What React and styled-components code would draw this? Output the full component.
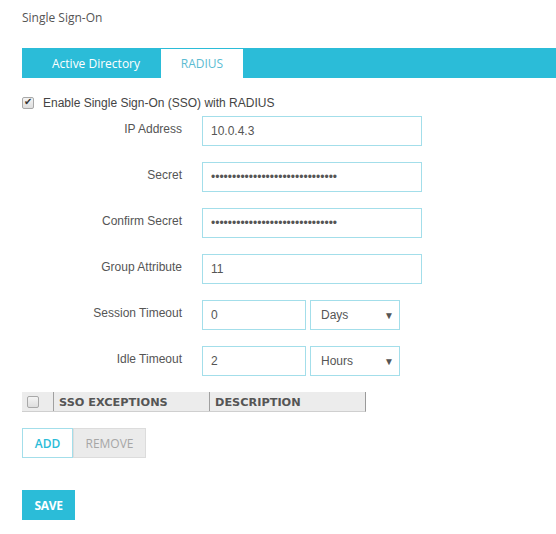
import React, { useState } from 'react';
import styled, { createGlobalStyle } from 'styled-components';

const GlobalStyle = createGlobalStyle`
  body {
    margin: 0;
    background: #fff;
    font-family: "Open Sans", Arial, sans-serif;
  }
`;

const Page = styled.div`
  padding: 9px 0 0 22px;
  width: 534px;
`;

const Title = styled.div`
  font-size: 12px;
  line-height: 18px;
  color: #555;
`;

const TabBar = styled.div`
  display: flex;
  margin-top: 21px;
  height: 30px;
  background: #2bbcd8;
`;

const Tab = styled.button`
  width: ${(p) => p.$width}px;
  height: ${(p) => (p.$active ? 29 : 30)}px;
  margin-top: ${(p) => (p.$active ? 1 : 0)}px;
  margin-right: 1px;
  border: none;
  padding: 0 0 0 ${(p) => p.$indent || 0}px;
  font-family: "Open Sans", Arial, sans-serif;
  font-size: 12px;
  background: ${(p) => (p.$active ? '#fff' : '#2bbcd8')};
  color: ${(p) => (p.$active ? '#5cbcd2' : '#fff')};
  cursor: pointer;
`;

const Checkbox = styled.input.attrs({ type: 'checkbox' })`
  appearance: none;
  box-sizing: border-box;
  position: relative;
  margin: 0;
  width: 12px;
  height: 12px;
  border: 1px solid #a8a8a8;
  border-radius: 2px;
  background: linear-gradient(#f4f4f4, #dedede);

  &:checked::after {
    content: '✔';
    position: absolute;
    left: 1px;
    top: -2px;
    font-size: 10px;
    line-height: 12px;
    color: #333;
  }
`;

const EnableRow = styled.label`
  display: flex;
  align-items: center;
  gap: 9px;
  margin-top: 17px;
  height: 16px;
  font-family: "Liberation Sans", Arial, sans-serif;
  font-size: 12px;
  color: #444;
`;

const Form = styled.div`
  display: flex;
  flex-direction: column;
  gap: 16px;
  margin-top: 5px;
`;

const Row = styled.div`
  display: flex;
  gap: 20px;
  height: 30px;
`;

const Label = styled.div`
  width: 160px;
  text-align: right;
  padding-top: 6px;
  line-height: 14px;
  font-family: "Liberation Sans", Arial, sans-serif;
  font-size: 12px;
  color: #555;
`;

const Fields = styled.div`
  display: flex;
  gap: 4px;
`;

const TextInput = styled.input`
  box-sizing: border-box;
  width: ${(p) => p.$width}px;
  height: 30px;
  border: 1px solid #a3deea;
  padding: 0 8px;
  font-family: "Liberation Sans", Arial, sans-serif;
  font-size: 12px;
  color: #555;
  outline: none;
`;

const SelectBox = styled.div`
  box-sizing: border-box;
  display: flex;
  align-items: center;
  width: 90px;
  height: 30px;
  border: 1px solid #a3deea;
  padding: 0 5px 0 10px;

  select {
    flex: 1;
    appearance: none;
    border: none;
    outline: none;
    background: transparent;
    padding: 0;
    font-family: "Liberation Sans", Arial, sans-serif;
    font-size: 12px;
    color: #555;
  }

  span {
    font-size: 10px;
    color: #555;
  }
`;

const Table = styled.div`
  display: flex;
  margin-top: 16px;
  width: 344px;
  height: 20px;
  background: #ececec;
  border-bottom: 1px solid #cfcfcf;
  border-right: 1px solid #9a9a9a;
  box-sizing: border-box;
`;

const HeadCell = styled.div`
  display: flex;
  align-items: center;
  width: ${(p) => p.$width}px;
  padding: 1px 0 0 ${(p) => p.$pad || 5}px;
  box-sizing: border-box;
  border-left: ${(p) => (p.$first ? 'none' : '1px solid #a0a0a0')};
  font-family: "DejaVu Sans", Verdana, sans-serif;
  font-weight: bold;
  font-size: 11.3px;
  color: #555;
`;

const ButtonGroup = styled.div`
  display: flex;
  margin-top: 16px;
`;

const Button = styled.button`
  box-sizing: border-box;
  width: ${(p) => p.$width}px;
  height: 30px;
  padding: 0;
  font-family: "Open Sans", Arial, sans-serif;
  font-size: 12px;
  cursor: pointer;
  border: 1px solid ${(p) => (p.$primary ? '#a3deea' : '#dcdcdc')};
  background: ${(p) => (p.$primary ? '#fff' : '#ebebeb')};
  color: ${(p) => (p.$primary ? '#2bbcd8' : '#a6a6a6')};
  font-weight: ${(p) => (p.$primary ? 600 : 400)};
`;

const SaveButton = styled.button`
  margin-top: 32px;
  width: 53px;
  height: 30px;
  border: none;
  padding: 0;
  background: #2bbcd8;
  color: #fff;
  font-family: "Open Sans", Arial, sans-serif;
  font-weight: 700;
  font-size: 12px;
  letter-spacing: -0.3px;
  cursor: pointer;
`;

const App = () => {
  const [enabled, setEnabled] = useState(true);

  return (
    <Page>
      <GlobalStyle />
      <Title>Single Sign-On</Title>

      <TabBar>
        <Tab $width={138} $indent={10}>Active Directory</Tab>
        <Tab $width={82} $active>RADIUS</Tab>
      </TabBar>

      <EnableRow>
        <Checkbox checked={enabled} onChange={() => setEnabled(!enabled)} />
        Enable Single Sign-On (SSO) with RADIUS
      </EnableRow>

      <Form>
        <Row>
          <Label>IP Address</Label>
          <TextInput $width={220} defaultValue="10.0.4.3" />
        </Row>
        <Row>
          <Label>Secret</Label>
          <TextInput $width={220} type="password" defaultValue="aaaaaaaaaaaaaaaaaaaaaaaaaaaaaa" />
        </Row>
        <Row>
          <Label>Confirm Secret</Label>
          <TextInput $width={220} type="password" defaultValue="aaaaaaaaaaaaaaaaaaaaaaaaaaaaaa" />
        </Row>
        <Row>
          <Label>Group Attribute</Label>
          <TextInput $width={220} defaultValue="11" />
        </Row>
        <Row>
          <Label>Session Timeout</Label>
          <Fields>
            <TextInput $width={104} defaultValue="0" />
            <SelectBox>
              <select defaultValue="Days">
                <option>Days</option>
                <option>Hours</option>
                <option>Minutes</option>
              </select>
              <span>▼</span>
            </SelectBox>
          </Fields>
        </Row>
        <Row>
          <Label>Idle Timeout</Label>
          <Fields>
            <TextInput $width={104} defaultValue="2" />
            <SelectBox>
              <select defaultValue="Hours">
                <option>Days</option>
                <option>Hours</option>
                <option>Minutes</option>
              </select>
              <span>▼</span>
            </SelectBox>
          </Fields>
        </Row>
      </Form>

      <Table>
        <HeadCell $width={31} $pad={5} $first>
          <Checkbox />
        </HeadCell>
        <HeadCell $width={156}>SSO EXCEPTIONS</HeadCell>
        <HeadCell $width={156}>DESCRIPTION</HeadCell>
      </Table>

      <ButtonGroup>
        <Button $width={51} $primary>ADD</Button>
        <Button $width={73}>REMOVE</Button>
      </ButtonGroup>

      <SaveButton>SAVE</SaveButton>
    </Page>
  );
};

export default App;
